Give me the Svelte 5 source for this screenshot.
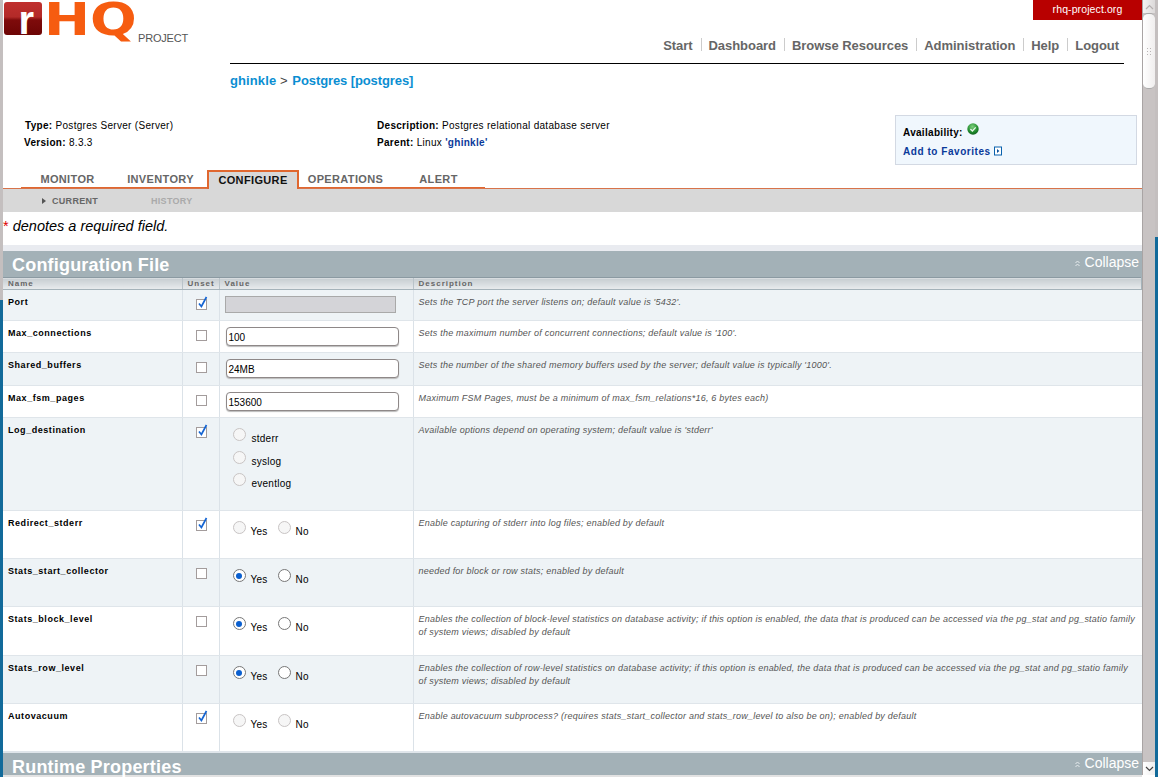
<script>
  const rows = [
    { name: 'Port', unset: true, kind: 'text', value: '', size: 'xs', desc: "Sets the TCP port the server listens on; default value is '5432'." },
    { name: 'Max_connections', kind: 'text', value: '100', size: 'sm', desc: "Sets the maximum number of concurrent connections; default value is '100'." },
    { name: 'Shared_buffers', kind: 'text', value: '24MB', size: 'md', desc: "Sets the number of the shared memory buffers used by the server; default value is typically '1000'." },
    { name: 'Max_fsm_pages', kind: 'text', value: '153600', size: 'sm', desc: 'Maximum FSM Pages, must be a minimum of max_fsm_relations*16, 6 bytes each)' },
    { name: 'Log_destination', unset: true, kind: 'list', options: ['stderr', 'syslog', 'eventlog'], size: 'xl', desc: "Available options depend on operating system; default value is 'stderr'" },
    { name: 'Redirect_stderr', unset: true, kind: 'bool', size: 'lg', desc: 'Enable capturing of stderr into log files; enabled by default' },
    { name: 'Stats_start_collector', kind: 'bool', yes: true, size: 'lg', desc: 'needed for block or row stats; enabled by default' },
    { name: 'Stats_block_level', kind: 'bool', yes: true, size: 'lg2', desc: 'Enables the collection of block-level statistics on database activity; if this option is enabled, the data that is produced can be accessed via the pg_stat and pg_statio family of system views; disabled by default' },
    { name: 'Stats_row_level', kind: 'bool', yes: true, size: 'lg', desc: 'Enables the collection of row-level statistics on database activity; if this option is enabled, the data that is produced can be accessed via the pg_stat and pg_statio family of system views; disabled by default' },
    { name: 'Autovacuum', unset: true, kind: 'bool', size: 'lg', desc: 'Enable autovacuum subprocess? (requires stats_start_collector and stats_row_level to also be on); enabled by default' }
  ]
  const nav = ['Start', 'Dashboard', 'Browse Resources', 'Administration', 'Help', 'Logout']
  const tabs = ['MONITOR', 'INVENTORY', 'CONFIGURE', 'OPERATIONS', 'ALERT']
</script>

{#snippet collapse()}
  <span class="collapse">
    <svg width="5" height="7" viewBox="0 0 5 7">
      <path d="M0.5 3l2-2 2 2M0.5 6l2-2 2 2" fill="none" stroke="#e6ebed" stroke-width="1" />
    </svg>
    Collapse
  </span>
{/snippet}

<div class="window">
  <div class="edge left"></div>

  <div class="page">
    <header>
      <div class="logo">
        <span class="logo-r">r</span><span class="logo-hq">HQ</span><span class="logo-project">PROJECT</span>
      </div>
      <div class="head-right">
        <a class="site-link" href="#top">rhq-project.org</a>
        <nav>
          {#each nav as item, i}
            <a href="#top" class:first={i === 0}>{item}</a>
          {/each}
        </nav>
        <div class="crumbs"><a href="#top">ghinkle</a> <span>&gt;</span> <a class="res" href="#top">Postgres [postgres]</a></div>
      </div>
    </header>

    <section class="summary">
      <div class="facts">
        <p><b>Type:</b> Postgres Server (Server)</p>
        <p class="shift"><b>Version:</b> 8.3.3</p>
      </div>
      <div class="facts second">
        <p><b>Description:</b> Postgres relational database server</p>
        <p><b>Parent:</b> Linux <a href="#top">'ghinkle'</a></p>
      </div>
      <div class="avail">
        <p class="avail-line">
          <b>Availability:</b>
          <svg width="12" height="12" viewBox="0 0 12 12">
            <defs>
              <radialGradient id="ball" cx="0.45" cy="0.3" r="0.8">
                <stop offset="0" stop-color="#7ccf7c" />
                <stop offset="0.6" stop-color="#1f8a2c" />
                <stop offset="1" stop-color="#0c4f18" />
              </radialGradient>
            </defs>
            <circle cx="6" cy="6" r="5.7" fill="url(#ball)" />
            <path d="M3.4 6l2 2 3.3-3.6" fill="none" stroke="#e8f7e8" stroke-width="1.3" />
          </svg>
        </p>
        <a class="fav" href="#top">Add to Favorites
          <svg width="8" height="10" viewBox="0 0 8 10">
            <rect x="0.5" y="1" width="7" height="8" fill="#fff" stroke="#0a62ae" />
            <path d="M3 3l2.4 2-2.4 2z" fill="#0a4f9a" />
          </svg>
        </a>
      </div>
    </section>

    <div class="tabs">
      {#each tabs as tab}
        <span class="tab" class:active={tab === 'CONFIGURE'}>{tab}</span>
      {/each}
    </div>
    <div class="subtabs">
      <span class="sub current"><i class="arrow"></i>CURRENT</span>
      <span class="sub">HISTORY</span>
    </div>

    <p class="required"><span>*</span> denotes a required field.</p>
    <div class="spacer"></div>

    <div class="section-head">
      <h2>Configuration File</h2>
      {@render collapse()}
    </div>

    <table>
      <colgroup>
        <col class="c-name" /><col class="c-unset" /><col class="c-value" /><col />
      </colgroup>
      <thead>
        <tr><th>Name</th><th>Unset</th><th>Value</th><th>Description</th></tr>
      </thead>
      <tbody>
        {#each rows as row, i}
          <tr class={row.size} class:odd={i % 2 === 0}>
            <td class="name">{row.name}</td>
            <td class="unset">
              <span class="check">
                {#if row.unset}
                  <svg width="12" height="14" viewBox="0 0 12 14">
                    <path d="M3 7.5l2.4 3L10.5 1" fill="none" stroke="#1464d2" stroke-width="1.7" />
                  </svg>
                {/if}
              </span>
            </td>
            <td class="value">
              {#if row.kind === 'text'}
                <span class="input" class:off={row.unset}>{row.value}</span>
              {:else if row.kind === 'list'}
                <div class="radio-list">
                  {#each row.options as opt}
                    <label><span class="radio off"></span><em>{opt}</em></label>
                  {/each}
                </div>
              {:else}
                <div class="radio-pair">
                  <label><span class="radio" class:off={row.unset} class:on={row.yes}></span><em>Yes</em></label>
                  <label><span class="radio" class:off={row.unset}></span><em>No</em></label>
                </div>
              {/if}
            </td>
            <td class="desc">{row.desc}</td>
          </tr>
        {/each}
      </tbody>
    </table>

    <div class="section-head last">
      <h2>Runtime Properties</h2>
      {@render collapse()}
    </div>
    <div class="page-foot"></div>
  </div>

  <div class="scrollbar">
    <div class="sb-btn"><svg width="9" height="6" viewBox="0 0 9 6"><path d="M1 5l3.5-3.5L8 5" fill="none" stroke="#b5b0b0" stroke-width="1.2" /></svg></div>
    <div class="sb-thumb"><span class="grip"></span></div>
    <div class="sb-track"></div>
    <div class="sb-btn down"><svg width="9" height="6" viewBox="0 0 9 6"><path d="M1 1l3.5 3.5L8 1" fill="none" stroke="#444" stroke-width="1.2" /></svg></div>
  </div>

  <div class="edge right"></div>
</div>

<style>
  :global(body) {
    margin: 0;
    overflow: hidden;
    background: #fff;
  }

  .window {
    display: flex;
    height: 777px;
    overflow: hidden;
    font-family: 'Liberation Sans', Arial, sans-serif;
    color: #000;
  }

  .edge {
    flex: 0 0 3px;
    background: #c4bfbf;
  }
  .edge.left {
    background: linear-gradient(#c4bfbf 300px, #126a9a 300px);
  }
  .edge.right {
    background: linear-gradient(#c4bfbf 237px, #126a9a 237px);
  }

  .page {
    flex: 0 0 1139px;
    min-width: 0;
    background: #fff;
  }

  header {
    display: flex;
    height: 107px;
  }

  .logo {
    flex: 0 0 227px;
    display: flex;
    align-items: flex-start;
    height: 45px;
    position: relative;
  }
  .logo-r {
    width: 38px;
    height: 33px;
    margin: 2px 0 0 1px;
    border-radius: 3px;
    background: linear-gradient(#c0302e 0, #b32a28 45%, #7e0b0b 55%, #6d0505 100%);
    color: #fff;
    font: bold 40px/36px 'Liberation Sans', sans-serif;
    text-align: right;
    padding-right: 8px;
    box-sizing: border-box;
  }
  .logo-hq {
    display: inline-block;
    margin-left: 2px;
    font: bold 44px/40px 'DejaVu Sans', sans-serif;
    color: #f65c10;
    transform: scaleX(1.25);
    transform-origin: left top;
  }
  .logo-project {
    position: absolute;
    left: 135px;
    top: 31px;
    font: 11px/14px 'Liberation Sans', sans-serif;
    letter-spacing: -0.2px;
    color: #555;
  }

  .head-right {
    flex: 1;
    display: flex;
    flex-direction: column;
    min-width: 0;
  }

  .site-link {
    align-self: flex-end;
    width: 109px;
    height: 20px;
    background: #b80000;
    color: #fff;
    font-size: 10.5px;
    letter-spacing: 0.1px;
    line-height: 19px;
    text-align: center;
    text-decoration: none;
  }

  nav {
    display: flex;
    justify-content: flex-end;
    width: 894px;
    height: 44px;
    box-sizing: border-box;
    padding: 18px 5px 0 0;
    border-bottom: 1px solid #000;
    margin-bottom: 9px;
  }
  nav a {
    font-size: 13px;
    font-weight: bold;
    line-height: 15px;
    height: 13px;
    letter-spacing: -0.05px;
    color: #666;
    text-decoration: none;
    padding: 0 0 0 7px;
    margin-left: 8px;
    border-left: 1px solid #ccc;
  }
  nav a.first {
    border-left: 0;
  }

  .crumbs {
    font-size: 13px;
    font-weight: bold;
    line-height: 16px;
    letter-spacing: 0.1px;
  }
  .crumbs a {
    color: #0a8ed2;
    text-decoration: none;
  }
  .crumbs a.res {
    letter-spacing: -0.1px;
    margin-left: 1px;
  }
  .crumbs span {
    font-weight: normal;
    color: #444;
  }

  .summary {
    display: flex;
    height: 63px;
    padding-top: 8px;
    box-sizing: border-box;
    font-size: 10px;
    letter-spacing: 0.3px;
  }
  .summary p {
    margin: 0;
  }
  .facts {
    flex: 0 0 352px;
    padding: 2px 0 0 22px;
  }
  .facts p {
    height: 17px;
    line-height: 17px;
  }
  .facts .shift {
    margin-left: -1px;
  }
  .facts.second {
    flex: 0 0 518px;
    padding-left: 0;
  }
  .facts a {
    color: #0a3a9a;
    font-weight: bold;
    text-decoration: none;
  }

  .avail {
    width: 226px;
    height: 35px;
    background: #f0f7fd;
    border: 1px solid #d3d9e3;
    padding: 7px 7px 6px;
    letter-spacing: 0.3px;
  }
  .avail-line {
    height: 18px;
    line-height: 20px;
    font-weight: bold;
  }
  .avail-line svg {
    vertical-align: 1px;
    margin-left: 1px;
  }
  .fav {
    display: block;
    margin-top: 3px;
    line-height: 16px;
    font-weight: bold;
    letter-spacing: 0.55px;
    color: #0a3a9a;
    text-decoration: none;
  }
  .fav svg {
    vertical-align: -1px;
  }

  .tabs {
    display: flex;
    height: 19px;
    padding-left: 18px;
    box-sizing: border-box;
    border-bottom: 1px solid #d8734a;
  }
  .tab {
    height: 18px;
    line-height: 19px;
    font-size: 11px;
    font-weight: bold;
    letter-spacing: 0.35px;
    color: #666;
    text-align: center;
    width: 93px;
    box-sizing: border-box;
    border-bottom: 1px solid #e0672f;
  }
  .tab:nth-child(3) { width: 92px; }
  .tab.active {
    height: 19px;
    color: #111;
    background: #d8d8d8;
    border: 2px solid #e0672f;
    border-bottom: 0;
    line-height: 17px;
  }

  .subtabs {
    display: flex;
    height: 23px;
    padding-left: 39px;
    background: #d8d8d8;
    align-items: center;
  }
  .sub {
    width: 109px;
    font-size: 9px;
    font-weight: bold;
    letter-spacing: 0.3px;
    color: #aaa;
    padding-top: 1px;
  }
  .sub.current {
    color: #666;
  }
  .arrow {
    display: inline-block;
    width: 0;
    height: 0;
    border-left: 4px solid #555;
    border-top: 3.5px solid transparent;
    border-bottom: 3.5px solid transparent;
    margin-right: 6px;
  }

  .required {
    margin: 0;
    height: 33px;
    font-size: 14.5px;
    font-style: italic;
    line-height: 28px;
  }
  .required span {
    color: #d00;
    font-style: normal;
  }

  .spacer {
    height: 6px;
    background: #e9ebf0;
  }

  .section-head {
    display: flex;
    justify-content: space-between;
    height: 26px;
    background: #a3b1b7;
    color: #fff;
  }
  .section-head h2 {
    margin: 0;
    padding-left: 9px;
    font-size: 18px;
    line-height: 28px;
    letter-spacing: 0.2px;
  }
  .collapse {
    font-size: 14px;
    line-height: 22px;
    padding-right: 3px;
  }
  .collapse svg {
    margin-right: 1px;
  }
  .section-head.last {
    height: 22px;
    border-top: 1px solid #dfe5ea;
  }
  .section-head.last .collapse {
    line-height: 20px;
  }
  .page-foot {
    height: 2px;
    background: #e2e2e2;
  }

  table {
    width: 1139px;
    table-layout: fixed;
    border-collapse: collapse;
  }
  .c-name { width: 179px; }
  .c-unset { width: 37px; }
  .c-value { width: 194px; }

  th {
    height: 12px;
    padding: 0 0 0 5px;
    box-sizing: border-box;
    text-align: left;
    font-size: 8px;
    letter-spacing: 1px;
    font-weight: bold;
    color: #666;
    background: linear-gradient(#c6cdd1, #e9ecee);
    border-top: 1px solid #8b9aa2;
    border-bottom: 1px solid #a5b3ba;
    border-left: 1px solid #b9c3c9;
  }
  th:first-child { border-left: 0; }
  th:last-child { border-right: 1px solid #a5b3ba; }

  td {
    padding: 0;
    vertical-align: top;
    border-left: 1px solid #dbe2e8;
    border-bottom: 1px solid #dfe5ea;
    background: #fff;
  }
  td:first-child { border-left: 0; }
  tr.odd td { background: #eef3f6; }

  tr.xs td { height: 30px; }
  tr.sm td { height: 31px; }
  tr.md td { height: 32px; }
  tr.xl td { height: 92px; }
  tr.lg td { height: 47px; }
  tr.lg2 td { height: 48px; }

  .name {
    padding: 6px 0 0 5px;
    font-size: 9px;
    line-height: 12px;
    font-weight: bold;
    letter-spacing: 0.55px;
    box-sizing: border-box;
  }

  .check {
    display: block;
    position: relative;
    width: 9px;
    height: 9px;
    margin: 9px 0 0 13px;
    border: 1px solid #a39c9c;
    background: #fff;
  }
  .check svg {
    position: absolute;
    left: -1px;
    top: -4px;
  }

  .value {
    padding-left: 6px;
    box-sizing: border-box;
  }
  .input {
    display: block;
    width: 173px;
    height: 19px;
    margin-top: 6px;
    box-sizing: border-box;
    border: 1px solid #8e8888;
    border-radius: 4px;
    padding-left: 2px;
    background: #fff;
    font-size: 10px;
    line-height: 19px;
    box-shadow: 0 1px 1px #bbb;
  }
  .input.off {
    width: 171px;
    height: 17px;
    margin-left: -1px;
    border-radius: 0;
    border-color: #a9a9a9;
    background: #d4d4d8;
    box-shadow: none;
  }

  .radio {
    display: inline-block;
    position: relative;
    width: 11px;
    height: 11px;
    border: 1px solid #777;
    border-radius: 50%;
    background: #fff;
    flex: none;
  }
  .radio.off {
    border-color: #c8c4c4;
    background: #f6f6f6;
  }
  .radio.on::after {
    content: '';
    position: absolute;
    left: 2.5px;
    top: 2.5px;
    width: 6px;
    height: 6px;
    border-radius: 50%;
    background: #0a5fcf;
  }

  label {
    display: flex;
    align-items: flex-start;
  }
  label em {
    font-style: normal;
    font-size: 10px;
    line-height: 12px;
    letter-spacing: 0.25px;
    margin: 5px 0 0 5px;
  }
  .radio-list {
    padding: 10px 0 0 7px;
  }
  .radio-list label {
    height: 22.7px;
  }
  .radio-list em {
    margin-left: 6px;
  }
  .radio-pair {
    display: flex;
    gap: 10px;
    padding: 10px 0 0 7px;
  }

  .desc {
    padding: 6px 4px 0 5px;
    font-size: 9px;
    line-height: 13px;
    letter-spacing: 0.23px;
    font-style: italic;
    color: #555;
    box-sizing: border-box;
  }

  .scrollbar {
    flex: 0 0 13px;
    display: flex;
    flex-direction: column;
    height: 775px;
    background: #c8c3c3;
    box-sizing: border-box;
    border-left: 1px solid #a9a4a4;
  }
  .sb-btn {
    height: 13px;
    flex: none;
    display: flex;
    align-items: center;
    justify-content: center;
    background: linear-gradient(90deg, #f4f3f3, #dcd9d9);
  }
  .sb-btn.down {
    background: linear-gradient(90deg, #fff, #eee);
  }
  .sb-thumb {
    height: 76px;
    flex: none;
    display: flex;
    align-items: center;
    justify-content: center;
    background: linear-gradient(90deg, #fff, #f0eeee);
    border: 1px solid #aaa;
    border-right: 0;
    border-left: 0;
    border-radius: 5px;
    box-sizing: border-box;
  }
  .grip {
    width: 6px;
    height: 9px;
    background-image: radial-gradient(#b9b5b5 40%, transparent 45%);
    background-size: 3px 3px;
  }
  .sb-track {
    flex: 1;
  }
</style>
